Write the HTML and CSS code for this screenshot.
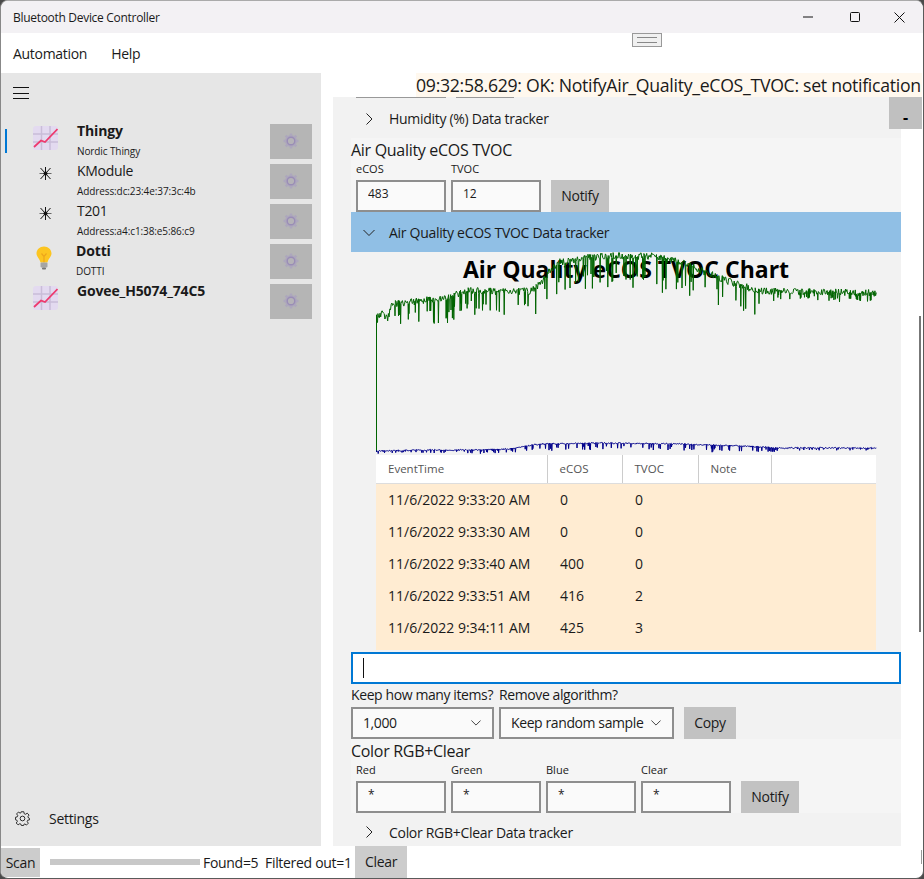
FILE: index.html
```html
<!DOCTYPE html>
<html lang="en">
<head>
<meta charset="UTF-8">
<title>Bluetooth Device Controller</title>
<link rel="stylesheet" href="styles.css">
</head>
<body>
<svg class="defs" width="0" height="0">
    <symbol id="chart-icon" viewBox="0 0 25 24">
        <rect width="25" height="24" rx="3" fill="#e3daf0"/>
        <path d="M8.500 0V24M17 0V24M0 8H25M0 16H25" stroke="#c9bdd8" stroke-width="1.500"/>
        <path d="M1 21L8 14.500L12 16L24.500 3" fill="none" stroke="#ee3a6e" stroke-width="1.800"/>
    </symbol>
    <symbol id="star-icon" viewBox="0 0 13 13">
        <path d="M0.500 6.500H12.500" stroke="#666" stroke-width="1"/>
        <path d="M6.500 0V13M1.500 1L11.500 12M11.500 1L1.500 12" fill="none" stroke="#111" stroke-width="1"/>
        <circle cx="6.500" cy="6.500" r="2" fill="#111"/>
    </symbol>
    <symbol id="bulb-icon" viewBox="0 0 16 24">
        <path d="M8 0.500C3.800 0.500 0.500 3.500 0.500 7.500C0.500 11 3.800 12.500 4.500 16.500H11.500C12.200 12.500 15.500 11 15.500 7.500C15.500 3.500 12.200 0.500 8 0.500Z" fill="#fcc521"/>
        <path d="M5.500 7.500L8 10.500L10.500 7.500M8 10.500V16.500" fill="none" stroke="#eda51c" stroke-width="1.200"/>
        <rect x="4.500" y="16.500" width="7" height="5" rx="1" fill="#a5a5a5"/>
        <rect x="6" y="21.500" width="4" height="2" rx="0.800" fill="#777"/>
    </symbol>
    <symbol id="dim-gear" viewBox="0 0 18 18">
        <circle cx="9" cy="9" r="6" fill="#ada7bd"/>
        <path d="M9 1.500V16.500M1.500 9H16.500M3.700 3.700L14.300 14.300M14.300 3.700L3.700 14.300" stroke="#ada7bd" stroke-width="2.500"/>
        <circle cx="9" cy="9" r="3.800" fill="#b5b3b8" stroke="#9a8db6" stroke-width="1.400"/>
    </symbol>
    <symbol id="chev-right" viewBox="0 0 12 12">
        <path d="M3.500 0.500L9 6L3.500 11.500" fill="none" stroke="#222" stroke-width="1"/>
    </symbol>
    <symbol id="chev-down" viewBox="0 0 12 12">
        <path d="M0.500 3L6 8.500L11.500 3" fill="none" stroke="#222" stroke-width="1"/>
    </symbol>
</svg>

<div class="window">
    <header class="titlebar">
        <span class="app-title">Bluetooth Device Controller</span>
        <div class="win-buttons">
            <svg class="min-icon" width="10" height="10" viewBox="0 0 10 10"><path d="M0 5H10" stroke="#111"/></svg>
            <svg width="10" height="10" viewBox="0 0 10 10"><rect x="0.500" y="0.500" width="9" height="9" rx="1" fill="none" stroke="#111"/></svg>
            <svg width="11" height="11" viewBox="0 0 11 11"><path d="M0.500 0.500L10.500 10.500M10.500 0.500L0.500 10.500" stroke="#111"/></svg>
        </div>
    </header>

    <nav class="menubar">
        <span>Automation</span>
        <span>Help</span>
        <div class="grip"></div>
    </nav>

    <main class="main">
        <aside class="sidebar">
            <div class="hamburger"><i></i><i></i><i></i></div>

            <div class="device">
                <span class="mark on"></span>
                <svg class="dev-icon"><use href="#chart-icon"/></svg>
                <div class="dev-text"><b>Thingy</b><small>Nordic Thingy</small></div>
                <div class="dev-btn"><svg width="18" height="18"><use href="#dim-gear"/></svg></div>
            </div>
            <div class="device">
                <span class="mark"></span>
                <svg class="dev-icon star"><use href="#star-icon"/></svg>
                <div class="dev-text"><span>KModule</span><small>Address:dc:23:4e:37:3c:4b</small></div>
                <div class="dev-btn"><svg width="18" height="18"><use href="#dim-gear"/></svg></div>
            </div>
            <div class="device">
                <span class="mark"></span>
                <svg class="dev-icon star"><use href="#star-icon"/></svg>
                <div class="dev-text"><span>T201</span><small>Address:a4:c1:38:e5:86:c9</small></div>
                <div class="dev-btn"><svg width="18" height="18"><use href="#dim-gear"/></svg></div>
            </div>
            <div class="device">
                <span class="mark"></span>
                <svg class="dev-icon bulb"><use href="#bulb-icon"/></svg>
                <div class="dev-text"><b>Dotti</b><small>DOTTI</small></div>
                <div class="dev-btn"><svg width="18" height="18"><use href="#dim-gear"/></svg></div>
            </div>
            <div class="device">
                <span class="mark"></span>
                <svg class="dev-icon"><use href="#chart-icon"/></svg>
                <div class="dev-text"><b>Govee_H5074_74C5</b><small></small></div>
                <div class="dev-btn"><svg width="18" height="18"><use href="#dim-gear"/></svg></div>
            </div>

            <div class="settings">
                <svg width="15" height="15" viewBox="0 0 16 16">
                    <path d="M6.600 0.800H9.400L9.800 2.900L11.300 3.500L13 2.300L15 4.300L13.800 6L14.400 7.500L15.500 7.900V8.100V9.400L13.600 9.800L13 11.300L14.200 13L12.200 15L10.500 13.800L9.500 14.200L9.200 15.500H6.800L6.400 14.100L5 13.600L3.300 14.800L1.300 12.800L2.500 11.100L1.900 9.700L0.500 9.300V6.700L2.300 6.300L2.900 4.800L1.700 3.100L3.700 1.100L5.400 2.300L6.300 1.900Z" fill="none" stroke="#222"/>
                    <circle cx="8" cy="8" r="2.500" fill="none" stroke="#222"/>
                </svg>
                <span>Settings</span>
            </div>
        </aside>

        <section class="content">
            <div class="status">09:32:58.629: OK: NotifyAir_Quality_eCOS_TVOC: set notification</div>
            <div class="panel">
                <div class="cut-off"><i></i><i></i></div>
                <div class="expander">
                    <svg width="12" height="12"><use href="#chev-right"/></svg>
                    <span>Humidity (%) Data tracker</span>
                </div>

                <div class="sensor">
                    <h2>Air Quality eCOS TVOC</h2>
                    <div class="fields">
                        <div class="field"><label>eCOS</label><input type="text" value="483"></div>
                        <div class="field"><label>TVOC</label><input type="text" value="12"></div>
                        <button class="btn">Notify</button>
                    </div>
                </div>

                <div class="expander open">
                    <svg width="12" height="12"><use href="#chev-down"/></svg>
                    <span>Air Quality eCOS TVOC Data tracker</span>
                </div>

                <div class="tracker">
                    <div class="chart">
                        <h3>Air Quality eCOS TVOC Chart</h3>
                        <svg id="plot" class="plot" viewBox="351 252 550 203">
                            <polyline id="line-ecos" class="line-ecos"/>
                            <polyline id="line-tvoc" class="line-tvoc"/>
                        </svg>
                    </div>
                    <div class="data-wrap">
                        <table class="data">
                            <thead>
                                <tr><th>EventTime</th><th>eCOS</th><th>TVOC</th><th>Note</th><th></th></tr>
                            </thead>
                            <tbody>
                                <tr><td>11/6/2022 9:33:20 AM</td><td>0</td><td>0</td><td></td><td></td></tr>
                                <tr><td>11/6/2022 9:33:30 AM</td><td>0</td><td>0</td><td></td><td></td></tr>
                                <tr><td>11/6/2022 9:33:40 AM</td><td>400</td><td>0</td><td></td><td></td></tr>
                                <tr><td>11/6/2022 9:33:51 AM</td><td>416</td><td>2</td><td></td><td></td></tr>
                                <tr><td>11/6/2022 9:34:11 AM</td><td>425</td><td>3</td><td></td><td></td></tr>
                            </tbody>
                        </table>
                    </div>
                    <div class="note-box"><span class="caret"></span></div>
                    <div class="keep-labels"><span>Keep how many items?</span><span>Remove algorithm?</span></div>
                    <div class="keep-row">
                        <div class="select count"><span>1,000</span><svg width="10" height="10"><use href="#chev-down"/></svg></div>
                        <div class="select algo"><span>Keep random sample</span><svg width="10" height="10"><use href="#chev-down"/></svg></div>
                        <button class="btn copy">Copy</button>
                    </div>
                </div>

                <div class="sensor">
                    <h2>Color RGB+Clear</h2>
                    <div class="fields">
                        <div class="field"><label>Red</label><input type="text" value="*"></div>
                        <div class="field"><label>Green</label><input type="text" value="*"></div>
                        <div class="field"><label>Blue</label><input type="text" value="*"></div>
                        <div class="field"><label>Clear</label><input type="text" value="*"></div>
                        <button class="btn">Notify</button>
                    </div>
                </div>

                <div class="expander short">
                    <svg width="12" height="12"><use href="#chev-right"/></svg>
                    <span>Color RGB+Clear Data tracker</span>
                </div>
            </div>
            <button class="collapse">-</button>
            <div class="scrollbar"></div>
        </section>
    </main>

    <footer class="footer">
        <button class="btn scan">Scan</button>
        <div class="progress"></div>
        <span class="counts">Found=5&nbsp; Filtered out=1</span>
        <button class="btn clear">Clear</button>
        <div class="size-tick"></div>
    </footer>
</div>
<script src="chart.js"></script>
</body>
</html>
```

FILE: styles.css
```css
* {
    margin: 0;
    padding: 0;
    box-sizing: border-box;
}
html, body {
    width: 924px;
    height: 879px;
    overflow: hidden;
}
body {
    font-family: 'Open Sans', 'Noto Sans', sans-serif;
    font-size: 14px;
    letter-spacing: -0.3px;
    color: #1a1a1a;
    background-color: #4a4a4a;
}
.defs {
    position: absolute;
}
.window {
    width: 924px;
    height: 879px;
    display: flex;
    flex-direction: column;
    background-color: #fff;
    border: 1px solid #5a5a5a;
    border-top-color: #aaa;
    border-left-color: #888;
    border-radius: 8px;
    overflow: hidden;
}

/* title + menu */
.titlebar {
    height: 32px;
    flex: none;
    display: flex;
    align-items: center;
    justify-content: space-between;
    padding-left: 12px;
    background-color: #f3f1f4;
}
.app-title {
    font-size: 12px;
}
.win-buttons {
    display: flex;
    align-items: center;
    gap: 34px;
    padding-right: 18px;
}
.min-icon {
    margin-right: 3px;
}
.menubar {
    position: relative;
    height: 40px;
    flex: none;
    display: flex;
    align-items: center;
    gap: 24px;
    padding-left: 12px;
}
.grip {
    position: absolute;
    left: 631px;
    top: 0;
    width: 30px;
    height: 14px;
    background-color: #f0f0f0;
    border: 1px solid #999;
}
.grip::after {
    content: "";
    display: block;
    margin: 3px 4px;
    height: 4px;
    border-top: 1px solid #888;
    border-bottom: 1px solid #888;
}

/* left pane */
.main {
    flex: 1;
    min-height: 0;
    display: grid;
    grid-template-columns: 320px 1fr;
}
.sidebar {
    display: flex;
    flex-direction: column;
    background-color: #e6e6e6;
}
.hamburger {
    height: 48px;
    padding: 14px 0 0 12px;
}
.hamburger i {
    display: block;
    width: 16px;
    height: 1px;
    margin-bottom: 4.500px;
    background-color: #111;
}
.device {
    height: 40px;
    display: flex;
    align-items: center;
    padding: 0 9px 0 4px;
}
.mark {
    width: 2px;
    height: 24px;
    flex: none;
}
.mark.on {
    background-color: #0078d4;
}
.dev-icon {
    width: 25px;
    height: 24px;
    flex: none;
    align-self: flex-start;
    margin: 5px 19px 0 26px;
}
.dev-icon.star {
    width: 13px;
    height: 13px;
    margin: 6px 25px 0 32px;
}
.dev-icon.bulb {
    width: 16px;
    height: 24px;
    margin: 5px 24px 0 29px;
}
.dev-text {
    flex: 1;
    display: flex;
    flex-direction: column;
    line-height: 20px;
    white-space: nowrap;
}
.dev-text b, .dev-text span {
    font-size: 14px;
    height: 20px;
}
.dev-text b {
    letter-spacing: -0.15px;
}
.dev-text small {
    font-size: 10px;
    height: 20px;
    letter-spacing: -0.1px;
}
.dev-btn {
    width: 42px;
    height: 35px;
    display: flex;
    align-items: center;
    justify-content: center;
    background-color: #b5b5b5;
}
.settings {
    margin-top: auto;
    margin-bottom: 8px;
    height: 40px;
    display: flex;
    align-items: center;
    gap: 19px;
    padding-left: 14px;
}

/* right pane */
.content {
    position: relative;
    display: flex;
    flex-direction: column;
    padding-left: 12px;
    min-height: 0;
}
.status {
    height: 24px;
    flex: none;
    margin: 0 1px 0 83px;
    font-size: 17.700px;
    line-height: 24px;
    white-space: nowrap;
    overflow: hidden;
    background-color: #fff8ee;
}
.panel {
    width: 568px;
    flex: 1;
    min-height: 0;
    background-color: #f2f2f2;
}
.cut-off {
    height: 1px;
    display: flex;
    gap: 10px;
    padding-left: 23px;
}
.cut-off i {
    width: 90px;
    background-color: #999;
}
.cut-off i + i {
    width: 58px;
}
.expander {
    height: 40px;
    margin-left: 18px;
    display: flex;
    align-items: center;
    gap: 14px;
    padding: 1px 0 0 12px;
}
.expander.open {
    background-color: #90bfe5;
}
.expander.short {
    height: 33px;
    padding-top: 5px;
}
.sensor {
    height: 74px;
    margin-left: 18px;
    background-color: #f5f5f5;
}
.sensor h2 {
    font-size: 16px;
    font-weight: 400;
    line-height: 25px;
}
.fields {
    display: flex;
    align-items: flex-end;
    gap: 5px;
    padding-left: 5px;
}
.field label {
    display: block;
    height: 17px;
    font-size: 11px;
    line-height: 12px;
    letter-spacing: 0;
}
.field input {
    display: block;
    width: 90px;
    height: 32px;
    padding: 0 10px 6px;
    font: inherit;
    font-size: 12px;
    letter-spacing: 0;
    color: #1a1a1a;
    background-color: #fafafa;
    border: 2px solid #8e8e8e;
    border-radius: 0;
}
.btn {
    height: 32px;
    padding: 0 10px 1px;
    font: inherit;
    font-size: 14px;
    letter-spacing: -0.3px;
    color: #1a1a1a;
    background-color: #c2c2c2;
    border: none;
}
.fields .btn {
    margin-left: 5px;
    width: 58px;
}
.tracker {
    margin-left: 18px;
}
.chart {
    position: relative;
    height: 203px;
}
.chart h3 {
    padding-top: 2px;
    text-align: center;
    font-size: 23px;
    line-height: 30px;
    font-weight: 700;
    letter-spacing: 0;
    color: #000;
}
.plot {
    position: absolute;
    left: 0;
    top: 0;
    width: 550px;
    height: 203px;
}
.plot polyline {
    fill: none;
    stroke-width: 1;
}
.line-ecos {
    stroke: #006400;
}
.line-tvoc {
    stroke: #00008b;
}
.data-wrap {
    width: 500px;
    margin-left: 25px;
    padding-bottom: 7px;
    background-color: #ffecd2;
}
.data {
    width: 500px;
    border-collapse: collapse;
    table-layout: fixed;
}
.data th {
    height: 28px;
    padding-left: 12px;
    text-align: left;
    font-size: 11.500px;
    font-weight: 400;
    letter-spacing: 0;
    color: #555;
    background-color: #fff;
    border-right: 1px solid #ccc;
    border-bottom: 1px solid #ddd;
}
.data th:nth-child(1) { width: 171px; }
.data th:nth-child(2) { width: 75px; }
.data th:nth-child(3) { width: 76px; }
.data th:nth-child(4) { width: 73px; }
.data th:last-child {
    border-right: none;
}
.data td {
    height: 32px;
    padding-left: 13px;
    font-size: 14px;
    letter-spacing: 0;
}
.data td:first-child {
    padding-left: 12px;
}
.note-box {
    height: 32px;
    margin-top: 2px;
    padding: 4px 10px;
    background-color: #fff;
    border: 2px solid #0078d4;
}
.caret {
    display: block;
    width: 1px;
    height: 20px;
    background-color: #111;
}
.keep-labels {
    height: 23px;
    padding-bottom: 3px;
    display: flex;
    gap: 6px;
    align-items: center;
    font-size: 14px;
    letter-spacing: -0.4px;
    white-space: nowrap;
}
.keep-labels span:first-child {
    width: 142px;
}
.keep-row {
    display: flex;
    gap: 5px;
}
.select {
    height: 32px;
    display: flex;
    align-items: center;
    justify-content: space-between;
    padding: 0 11px 1px 10px;
    background-color: #fafafa;
    border: 2px solid #8e8e8e;
    font-size: 14px;
    letter-spacing: -0.4px;
}
.select.count {
    width: 143px;
}
.select.algo {
    width: 175px;
}
.btn.copy {
    margin-left: 5px;
    width: 52px;
}
.collapse {
    position: absolute;
    right: 1px;
    top: 24px;
    width: 33px;
    height: 32px;
    padding-top: 8px;
    font: inherit;
    font-size: 16px;
    font-weight: 700;
    background-color: #c0c0c0;
    border: none;
}
.scrollbar {
    position: absolute;
    right: 2px;
    top: 243px;
    width: 2px;
    height: 316px;
    background-color: #777;
}

/* bottom row */
.footer {
    position: relative;
    height: 32px;
    flex: none;
    display: flex;
    align-items: center;
}
.btn.scan {
    width: 39px;
    height: 29px;
    padding: 0;
    background-color: #ccc;
}
.progress {
    width: 150px;
    height: 6px;
    margin-left: 10px;
    background-color: #c8c8c8;
}
.counts {
    margin-left: 3px;
    width: 152px;
    white-space: nowrap;
}
.btn.clear {
    width: 52px;
    height: 32px;
    padding: 0 0 2px;
    background-color: #ccc;
}
.size-tick {
    position: absolute;
    right: 1px;
    top: 4px;
    width: 1px;
    height: 14px;
    background-color: #999;
}
```

FILE: chart.js
```js
// fake sensor trace, seeded so it looks the same every load
var seed = 12345;
function rnd() {
    seed = (seed * 16807) % 2147483647;
    return seed / 2147483647;
}

function lerp(table, x) {
    for (var i = 1; i < table.length; i++) {
        if (x <= table[i][0]) {
            var a = table[i - 1], b = table[i];
            return a[1] + (b[1] - a[1]) * (x - a[0]) / (b[0] - a[0]);
        }
    }
    return table[table.length - 1][1];
}

var ecosTop = [[376, 318], [382, 314], [388, 318], [392, 304], [420, 301], [445, 298], [470, 290], [490, 291],
    [505, 292], [530, 291], [540, 284], [550, 270], [560, 262], [585, 258], [610, 256], [650, 256], [680, 262],
    [700, 270], [730, 282], [760, 291], [876, 293]];
var ecosDip = [[376, 5], [392, 10], [400, 24], [520, 26], [540, 32], [720, 32], [760, 24], [775, 10], [876, 8]];
var tvocTop = [[376, 451], [420, 450], [470, 450], [510, 449], [540, 444], [600, 443], [680, 444], [740, 446], [780, 448], [876, 448]];

function trace(top, dip, noise, chance) {
    var pts = ['376.5,452'];
    for (var x = 376.5; x < 877; x += 0.7) {
        var y = lerp(top, x) + (rnd() - 0.5) * noise;
        pts.push(x.toFixed(1) + ',' + y.toFixed(1));
        if (rnd() < chance) {
            var d = lerp(dip, x);
            pts.push((x + 0.3).toFixed(1) + ',' + (y + d * (0.4 + rnd() * 0.6)).toFixed(1));
        }
    }
    return pts.join(' ');
}

document.getElementById('line-ecos').setAttribute('points', trace(ecosTop, ecosDip, 7, 0.2));
document.getElementById('line-tvoc').setAttribute('points', trace(tvocTop, [[376, 3], [510, 4], [540, 7], [740, 7], [780, 3], [876, 2]], 1.4, 0.2));
```
